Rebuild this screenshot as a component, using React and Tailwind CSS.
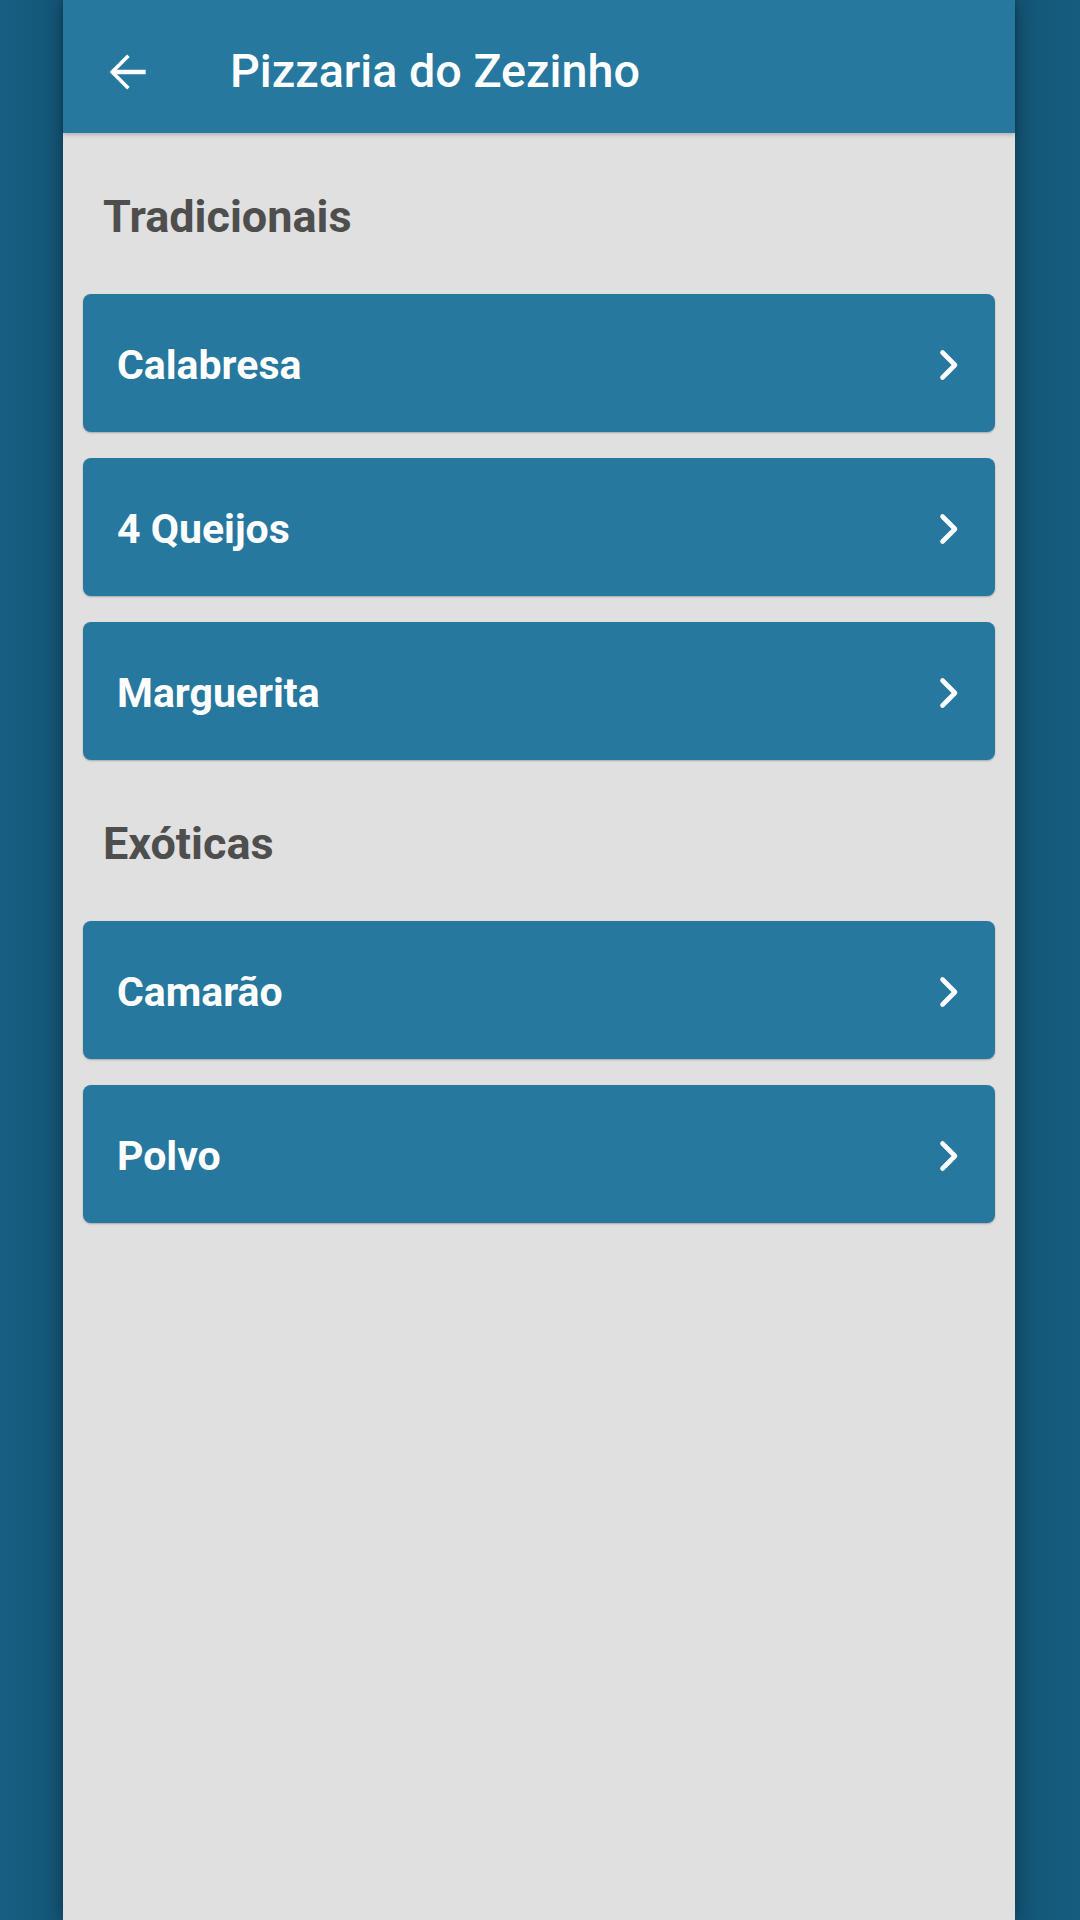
import { memo } from 'react';

const SECTIONS = [
  { title: 'Tradicionais', items: ['Calabresa', '4 Queijos', 'Marguerita'] },
  { title: 'Exóticas', items: ['Camarão', 'Polvo'] },
];

// Material style back arrow
const BackArrow = () => (
  <svg width="56" height="56" viewBox="0 0 24 24" fill="white">
    <path d="M20 11.05H7.7l5.45-5.45-1.1-1.1L4.55 12l7.5 7.5 1.1-1.1-5.45-5.45H20z" />
  </svg>
);

const Chevron = () => (
  <svg width="20" height="32" viewBox="0 0 20 32" fill="none" stroke="white" strokeWidth="4.6" strokeLinecap="round" strokeLinejoin="round">
    <polyline points="3.5,3.5 16,16 3.5,28.5" />
  </svg>
);

const PizzaRow = ({ name }) => (
  <button className="flex items-center justify-between w-full h-[138px] rounded-lg bg-[#26789f] pl-[34px] pr-[36px] pt-[4px] shadow-[0_1px_2px_rgba(0,0,0,0.25)] text-left">
    <span className="text-[41px] leading-[41px] font-bold text-white">{name}</span>
    <Chevron />
  </button>
);

const App = memo(() => {
  return (
    <div className="flex h-[1920px] w-[1080px] overflow-hidden bg-[#155d80] font-['Roboto',sans-serif]">
      <div className="w-[63px] shrink-0 bg-gradient-to-r from-[#165f83] to-[#135576]" />

      <div className="relative z-10 w-[952px] shrink-0 bg-[#e0e0e0] shadow-[0_0_18px_rgba(0,0,0,0.35)]">
        {/* Toolbar */}
        <header className="flex items-center h-[133px] pt-[10px] pl-[36px] bg-[#26789f] shadow-[0_2px_4px_rgba(0,0,0,0.2)]">
          <BackArrow />
          <h1 className="ml-[75px] text-[46.7px] leading-[47px] font-medium text-white">
            Pizzaria do Zezinho
          </h1>
        </header>

        {/* Menu list */}
        <div className="px-[20px]">
          {SECTIONS.map((section) => (
            <section key={section.title}>
              <h2 className="mt-[61px] mb-[55px] pl-[20px] text-[45px] leading-[45px] font-bold text-[#4e4e4e]">
                {section.title}
              </h2>
              <div className="flex flex-col gap-[26px]">
                {section.items.map((item) => (
                  <PizzaRow key={item} name={item} />
                ))}
              </div>
            </section>
          ))}
        </div>
      </div>

      <div className="flex-1 bg-gradient-to-r from-[#135576] to-[#155d80]" />
    </div>
  );
});

App.displayName = 'App';

export default App;
